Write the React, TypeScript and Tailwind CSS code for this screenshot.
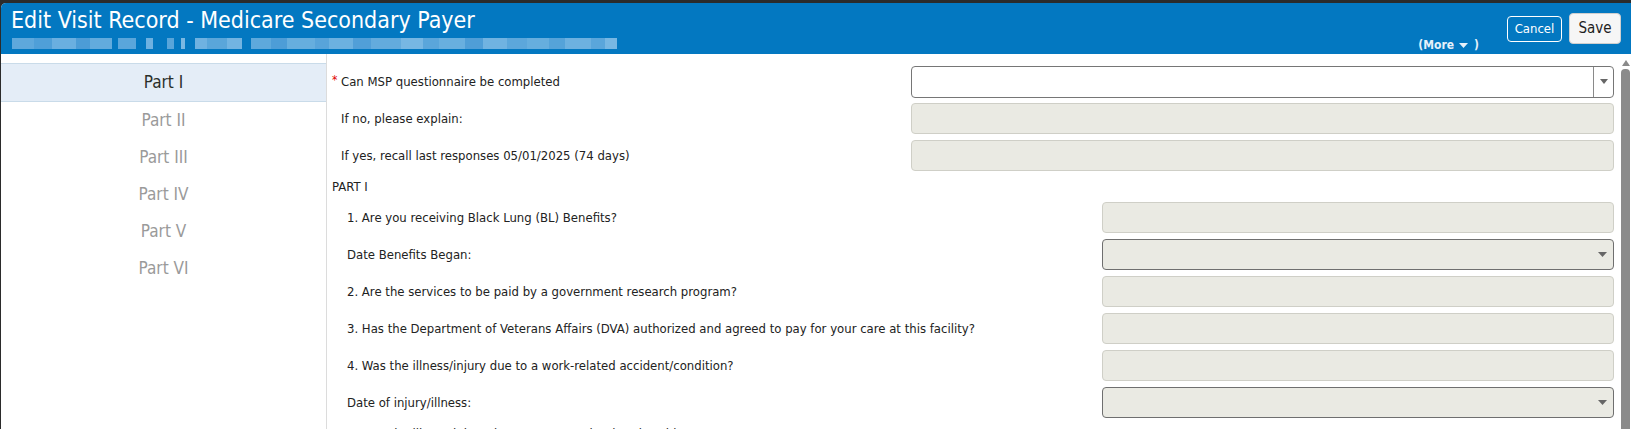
import React from "react";

const font = "font-['DejaVu_Sans_Condensed','DejaVu_Sans',sans-serif]";

// pixelated (redacted) sub-title blocks: [width, colour, gapAfter]
const blur: [number, string, number][] = [
  [22, "#5ea8dc", 0], [18, "#4f9fd8", 0], [24, "#6aafe0", 0], [14, "#4c9cd6", 0], [22, "#62abdd", 6],
  [18, "#5aa6db", 10], [7, "#6db1e1", 14], [7, "#58a5da", 7], [4, "#7ab8e3", 10],
  [12, "#6fb2e1", 0], [20, "#5aa6da", 0], [15, "#72b4e2", 9],
  [20, "#5ea9dc", 0], [16, "#4d9dd7", 0], [28, "#66aede", 0], [14, "#58a4da", 0], [24, "#6cb1e0", 0],
  [18, "#519fd8", 0], [30, "#63abdd", 0], [22, "#77b7e3", 0], [16, "#5aa6db", 0], [26, "#68afdf", 0],
  [18, "#4f9ed7", 0], [24, "#70b3e1", 0], [20, "#5ca7db", 0], [22, "#66aede", 0], [16, "#55a3d9", 0],
  [26, "#6db1e0", 0], [14, "#5aa6db", 0], [12, "#77b7e3", 0],
];

function Box({ w, select, white }: { w: string; select?: boolean; white?: boolean }) {
  if (white) {
    return (
      <div className={`${w} h-[32px] rounded-[4px] border border-[#767676] bg-white flex justify-end`}>
        <div className="w-[20px] border-l border-[#8a8a8a] flex items-center justify-center">
          <svg width="8" height="5" viewBox="0 0 8 5"><path d="M0 0h8L4 5z" fill="#666" /></svg>
        </div>
      </div>
    );
  }
  if (select) {
    return (
      <div className={`${w} h-[31px] rounded-[4px] border border-[#6f6f6f] bg-[#eaeae3] flex items-center justify-end pr-[6px]`}>
        <svg width="9" height="5" viewBox="0 0 9 5"><path d="M0 0h9L4.5 5z" fill="#666" /></svg>
      </div>
    );
  }
  return <div className={`${w} h-[31px] rounded-[4px] border border-[#cfcfc7] bg-[#eaeae3]`} />;
}

function Row({ label, pl, w, select, white, req }: { label: string; pl: string; w: string; select?: boolean; white?: boolean; req?: boolean }) {
  return (
    <div className="h-[37px] flex items-center">
      <div className={`flex-1 flex items-center ${pl} text-[13px] text-[#222]`}>
        {req && <span className="text-[#e00000] text-[12px] w-[9px] -mt-[3px]">*</span>}
        {label}
      </div>
      <Box w={w} select={select} white={white} />
    </div>
  );
}

export default function App() {
  const parts = ["Part I", "Part II", "Part III", "Part IV", "Part V", "Part VI"];
  return (
    <div className={`w-[1631px] h-[429px] bg-[#2b2b2b] pt-[3px] flex flex-col overflow-hidden ${font}`}>
      <div className="ml-[1px] flex-1 flex flex-col rounded-tl-[5px] overflow-hidden bg-white">
        {/* Header */}
        <div className="h-[51px] bg-[#0378c1] flex justify-between shrink-0">
          <div className="pl-[10px] pt-[3px]">
            <div className="text-white text-[23px] leading-[28px]">Edit Visit Record - Medicare Secondary Payer</div>
            <div className="flex h-[11px] mt-[4px] ml-[1px]">
              {blur.map(([bw, c, g], i) => (
                <span key={i} style={{ width: bw, background: c, marginRight: g }} className="h-full block" />
              ))}
            </div>
          </div>
          <div className="flex items-start pr-[10px]">
            <span className="mt-[34px] text-[12px] leading-[16px] font-bold text-[#e6f1fa] mr-[28px] flex items-center">
              (More
              <svg className="ml-[5px] mr-[6px]" width="9" height="5" viewBox="0 0 9 5"><path d="M0 0h9L4.5 5z" fill="#e6f1fa" /></svg>
              )
            </span>
            <button className="mt-[13px] w-[55px] h-[26px] rounded-[4px] border border-white text-white text-[13px] mr-[7px]">Cancel</button>
            <button className="mt-[10px] w-[52px] h-[31px] rounded-[4px] border border-[#cfcfcf] bg-[#f6f6f6] text-[#1e1e1e] text-[15px]">Save</button>
          </div>
        </div>

        {/* Body */}
        <div className="flex-1 flex overflow-hidden">
          <div className="w-[326px] border-r border-[#dcdcdc] pt-[9px] shrink-0">
            {parts.map((p, i) =>
              i === 0 ? (
                <div key={p} className="h-[39px] bg-[#e4edf7] border-y border-[#c9dbe9] flex items-center justify-center text-[17px] text-[#2a2f2a]">{p}</div>
              ) : (
                <div key={p} className="h-[37px] flex items-center justify-center text-[17px] text-[#9a9a9a]">{p}</div>
              )
            )}
          </div>

          <div className="flex-1 pt-[9px] pr-[6px]">
            <Row label="Can MSP questionnaire be completed" pl="pl-[5px]" w="w-[703px]" white req />
            <Row label="If no, please explain:" pl="pl-[14px]" w="w-[703px]" />
            <Row label="If yes, recall last responses 05/01/2025 (74 days)" pl="pl-[14px]" w="w-[703px]" />
            <div className="h-[25px] flex items-center pl-[5px] text-[13px] text-[#222]">PART I</div>
            <Row label="1. Are you receiving Black Lung (BL) Benefits?" pl="pl-[20px]" w="w-[512px]" />
            <Row label="Date Benefits Began:" pl="pl-[20px]" w="w-[512px]" select />
            <Row label="2. Are the services to be paid by a government research program?" pl="pl-[20px]" w="w-[512px]" />
            <Row label="3. Has the Department of Veterans Affairs (DVA) authorized and agreed to pay for your care at this facility?" pl="pl-[20px]" w="w-[512px]" />
            <Row label="4. Was the illness/injury due to a work-related accident/condition?" pl="pl-[20px]" w="w-[512px]" />
            <Row label="Date of injury/illness:" pl="pl-[20px]" w="w-[512px]" select />
            <div className="pt-[5px] pl-[20px] text-[13px] leading-[16px] text-[#222]">5. Was the illness/injury due to a non-work-related accident?</div>
          </div>

          {/* scrollbar */}
          <div className="w-[11px] shrink-0 flex flex-col items-center pt-[6px]">
            <svg width="8" height="6" viewBox="0 0 8 6"><path d="M4 0l4 6H0z" fill="#8a8a8a" /></svg>
            <div className="mt-[3px] w-[9px] flex-1 bg-[#8b8b8b] rounded-t-[4px]" />
          </div>
        </div>
      </div>
    </div>
  );
}
